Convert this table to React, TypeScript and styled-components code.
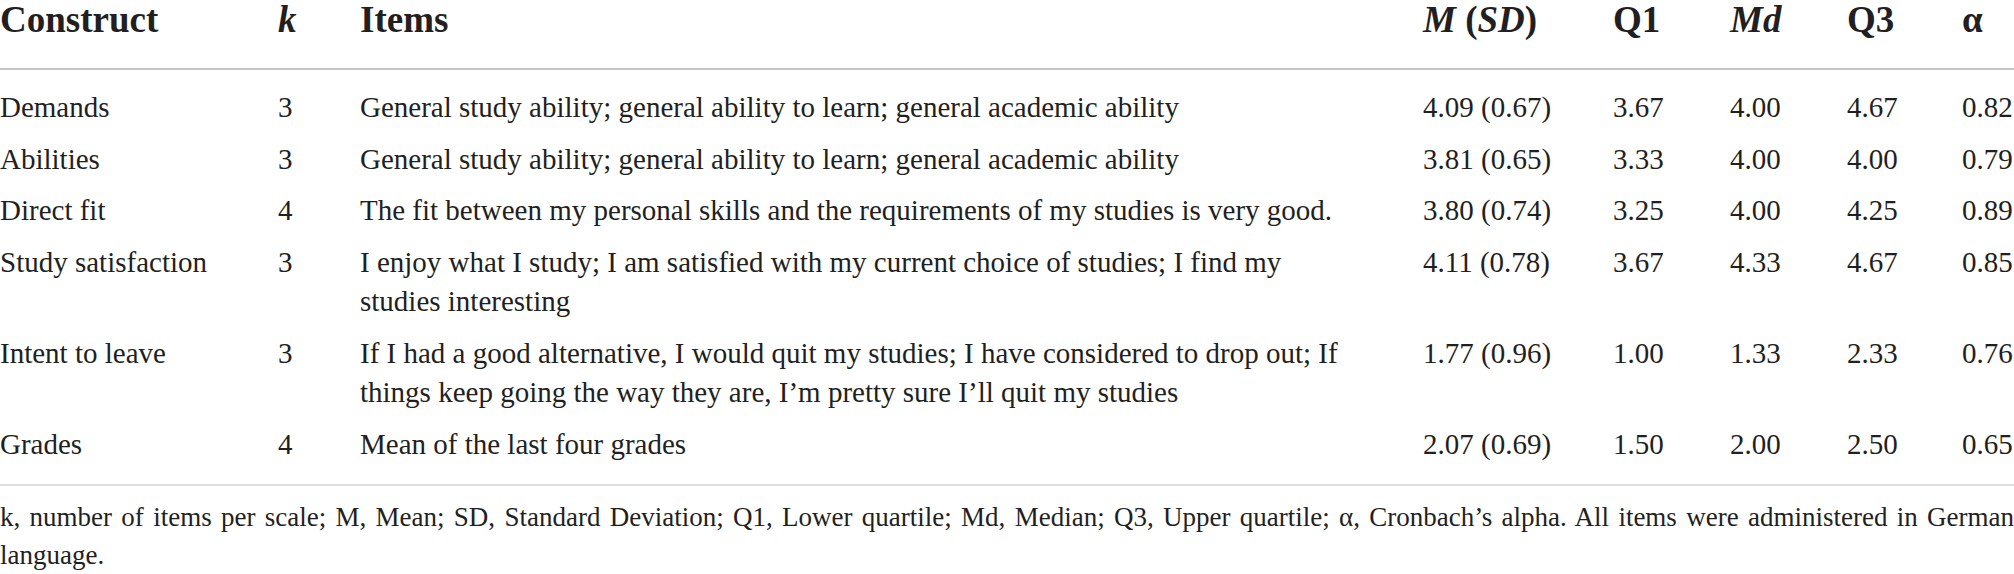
import React from "react";
import styled, { createGlobalStyle } from "styled-components";

const Global = createGlobalStyle`
  html, body { margin: 0; padding: 0; background: #ffffff; }
  body { font-family: "Liberation Serif", "Times New Roman", serif; color: #231f20; }
`;

const Wrap = styled.div`
  width: 2014px;
  display: flex;
  flex-direction: column;
`;

const Table = styled.table`
  width: 2014px;
  border-collapse: collapse;
  table-layout: fixed;
`;

const Col = styled.col<{ $w: number }>`
  width: ${(p) => p.$w}px;
`;

const HeadCell = styled.th`
  text-align: left;
  vertical-align: top;
  font-size: 37px;
  line-height: 40px;
  font-weight: 700;
  padding: 0 0 28px 0;
  border-bottom: 2px solid #c6c6c6;
  white-space: nowrap;
`;

const Row = styled.tr`
  &:first-child td { padding-top: 18px; }
  &:last-child td { padding-bottom: 20px; }
`;

const Cell = styled.td<{ $wide?: boolean }>`
  text-align: left;
  vertical-align: top;
  font-size: 29px;
  line-height: 39.5px;
  padding: 6px ${(p) => (p.$wide ? "68px" : "0")} 6px 0;
`;

const Footnote = styled.p`
  margin: 0;
  padding-top: 12px;
  border-top: 2px solid #dedede;
  font-size: 27px;
  line-height: 38px;
  text-align: justify;
`;

type R = { c: string; k: number; items: string; m: string; q1: string; md: string; q3: string; a: string };

const rows: R[] = [
  { c: "Demands", k: 3, items: "General study ability; general ability to learn; general academic ability", m: "4.09 (0.67)", q1: "3.67", md: "4.00", q3: "4.67", a: "0.82" },
  { c: "Abilities", k: 3, items: "General study ability; general ability to learn; general academic ability", m: "3.81 (0.65)", q1: "3.33", md: "4.00", q3: "4.00", a: "0.79" },
  { c: "Direct fit", k: 4, items: "The fit between my personal skills and the requirements of my studies is very good.", m: "3.80 (0.74)", q1: "3.25", md: "4.00", q3: "4.25", a: "0.89" },
  { c: "Study satisfaction", k: 3, items: "I enjoy what I study; I am satisfied with my current choice of studies; I find my studies interesting", m: "4.11 (0.78)", q1: "3.67", md: "4.33", q3: "4.67", a: "0.85" },
  { c: "Intent to leave", k: 3, items: "If I had a good alternative, I would quit my studies; I have considered to drop out; If things keep going the way they are, I\u2019m pretty sure I\u2019ll quit my studies", m: "1.77 (0.96)", q1: "1.00", md: "1.33", q3: "2.33", a: "0.76" },
  { c: "Grades", k: 4, items: "Mean of the last four grades", m: "2.07 (0.69)", q1: "1.50", md: "2.00", q3: "2.50", a: "0.65" },
];

export default function App() {
  return (
    <>
      <Global />
      <Wrap>
        <Table>
          <colgroup>
            <Col $w={278} />
            <Col $w={82} />
            <Col $w={1063} />
            <Col $w={190} />
            <Col $w={117} />
            <Col $w={117} />
            <Col $w={115} />
            <Col $w={52} />
          </colgroup>
          <thead>
            <tr>
              <HeadCell>Construct</HeadCell>
              <HeadCell><i>k</i></HeadCell>
              <HeadCell>Items</HeadCell>
              <HeadCell><i>M</i> (<i>SD</i>)</HeadCell>
              <HeadCell>Q1</HeadCell>
              <HeadCell><i>Md</i></HeadCell>
              <HeadCell>Q3</HeadCell>
              <HeadCell>α</HeadCell>
            </tr>
          </thead>
          <tbody>
            {rows.map((r) => (
              <Row key={r.c}>
                <Cell>{r.c}</Cell>
                <Cell>{r.k}</Cell>
                <Cell $wide>{r.items}</Cell>
                <Cell>{r.m}</Cell>
                <Cell>{r.q1}</Cell>
                <Cell>{r.md}</Cell>
                <Cell>{r.q3}</Cell>
                <Cell>{r.a}</Cell>
              </Row>
            ))}
          </tbody>
        </Table>
        <Footnote>
          k, number of items per scale; M, Mean; SD, Standard Deviation; Q1, Lower quartile; Md, Median; Q3, Upper quartile; α, Cronbach’s alpha. All items were administered in German language.
        </Footnote>
      </Wrap>
    </>
  );
}
